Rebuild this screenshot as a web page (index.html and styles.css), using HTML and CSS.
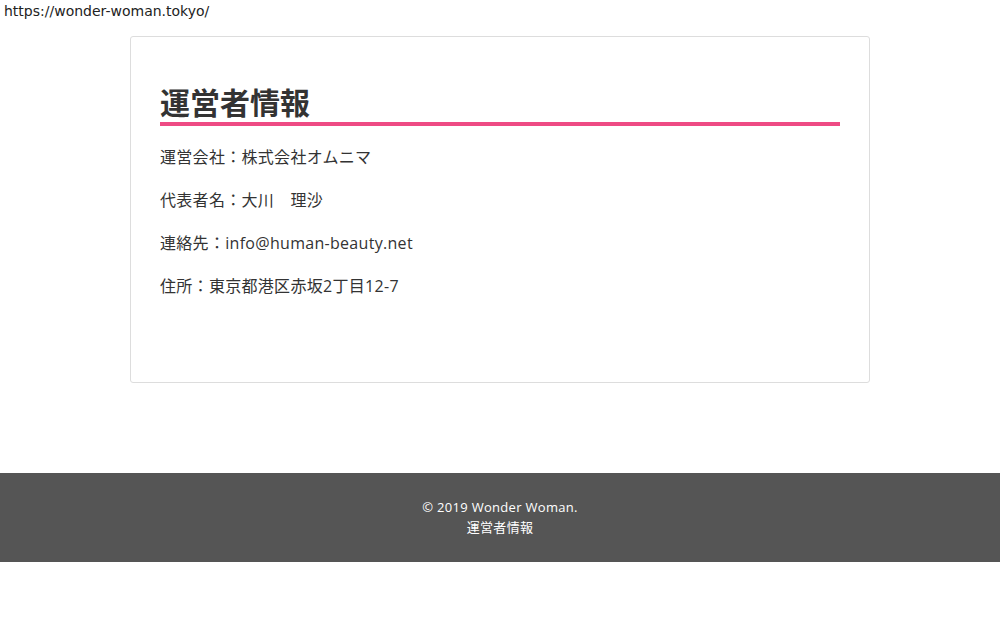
FILE: index.html
```html
<!DOCTYPE html>
<html lang="ja">

<head>
    <meta charset="UTF-8">
    <meta name="viewport" content="width=device-width, initial-scale=1">
    <title>運営者情報</title>
    <link rel="stylesheet" href="styles.css">
</head>

<body>

    <div class="site-url">https://wonder-woman.tokyo/</div>

    <main class="main">
        <article class="card">
            <h1 class="card-title">運営者情報</h1>
            <p>運営会社：株式会社オムニマ</p>
            <p>代表者名：大川　理沙</p>
            <p>連絡先：info@human-beauty.net</p>
            <p>住所：東京都港区赤坂2丁目12-7</p>
        </article>
    </main>

    <footer class="footer">
        <div class="copyright">© 2019 Wonder Woman.</div>
        <div class="footer-link">運営者情報</div>
    </footer>

</body>

</html>
```

FILE: styles.css
```css
:root {
    --accent: #ee4b84;
    --text: #333;
    --border: #dddddd;
    --footer: #555555;
}

body {
    margin: 0;
    font-family: "Open Sans", "Noto Sans CJK JP", sans-serif;
    color: var(--text);
    background-color: #fff;
}

.site-url {
    font-family: "DejaVu Sans", "Noto Sans CJK JP", sans-serif;
    font-size: 14px;
    line-height: 20px;
    padding: 1px 4px 0;
    color: #222;
}

.main {
    display: flex;
    justify-content: center;
    padding: 15px 0 90px;
}

.card {
    width: 740px;
    box-sizing: border-box;
    border: 1px solid var(--border);
    border-radius: 3px;
    padding: 44px 29px 66px;
}

.card-title {
    font-family: "Noto Sans CJK JP", sans-serif;
    font-size: 30px;
    font-weight: bold;
    line-height: 40px;
    margin: 0 0 18px;
    padding-bottom: 1px;
    border-bottom: 4px solid var(--accent);
}

.card p {
    font-size: 16px;
    line-height: 27px;
    letter-spacing: 0.3px;
    margin: 0 0 16px;
}

.footer {
    background-color: var(--footer);
    color: #fff;
    text-align: center;
    font-size: 13px;
    line-height: 20px;
    letter-spacing: 0.3px;
    padding: 24px 0 25px;
}
```
